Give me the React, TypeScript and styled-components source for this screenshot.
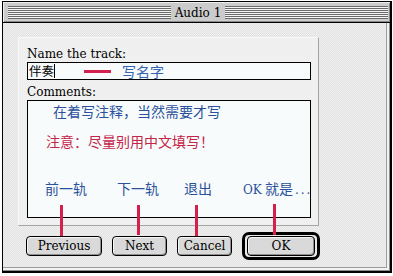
import React from "react";
import styled, { createGlobalStyle } from "styled-components";

const Global = createGlobalStyle`
  html, body { margin: 0; padding: 0; background: #ffffff; }
  body { font-family: "DejaVu Serif", serif; }
  * { box-sizing: border-box; }
`;

const serif = `"DejaVu Serif", "Noto Sans CJK SC", serif`;
const cjk = `"Noto Sans CJK SC", "DejaVu Sans", sans-serif`;

const Window = styled.div`
  position: relative;
  margin: 1px 0 0 2px;
  width: 390px;
  height: 272px;
  border: 1px solid #000;
  border-right-width: 2px;
  border-bottom-width: 2px;
  display: flex;
  flex-direction: column;
  background: #e4e4e4;
`;

const TitleBar = styled.div`
  height: 21px;
  border-bottom: 1px solid #000;
  background: #cbcbcb;
  box-shadow: inset 1px 1px 0 #eeeeee, inset -1px -1px 0 #8a8a8a;
  display: flex;
  align-items: center;
  padding: 0 2px 0 5px;
`;

const Stripes = styled.div`
  flex: 1;
  height: 13px;
  margin-top: 1px;
  background: repeating-linear-gradient(
    to bottom,
    #6a6a6a 0 1px,
    #f4f4f4 1px 2px
  );
`;

const Title = styled.div`
  font-family: ${serif};
  font-size: 12px;
  line-height: 14px;
  color: #000;
  padding: 0 4px;
  margin-top: 1px;
`;

const Frame = styled.div`
  flex: 1;
  display: flex;
  padding: 0 3px 3px 0;
  background: #f2f2f2;
  box-shadow: inset -1px -1px 0 #8c8c8c;
`;

const Content = styled.div`
  flex: 1;
  display: flex;
  flex-direction: column;
  padding: 14px 0 0 15px;
  border-right: 1px solid #9c9c9c;
  border-bottom: 1px solid #9c9c9c;
  background-color: #e9e9e9;
  background-image: repeating-conic-gradient(#e3e3e3 0 25%, #efefef 0 50%);
  background-size: 2px 2px;
`;

const Panel = styled.div`
  width: 301px;
  height: 189px;
  display: flex;
  flex-direction: column;
  padding: 9px 7px 0 8px;
  border: 1px solid #f8f8f8;
  border-right-color: #a4a4a4;
  border-bottom-color: #a4a4a4;
  background-color: #efefef;
  background-image: repeating-conic-gradient(#ececec 0 25%, #f3f3f3 0 50%);
  background-size: 2px 2px;
`;

const Label = styled.div<{ $gap?: number }>`
  font-family: ${serif};
  font-size: 12px;
  line-height: 14px;
  color: #000;
  margin-top: ${(p) => p.$gap ?? 0}px;
  margin-bottom: 1px;
`;

const Field = styled.div`
  height: 18px;
  border: 1px solid #000;
  background: #f7fbfb;
  display: flex;
  align-items: center;
  padding-left: 1px;
`;

const FieldText = styled.span`
  font-family: ${cjk};
  font-size: 12.5px;
  line-height: 14px;
  color: #000;
`;

const Caret = styled.span`
  width: 1px;
  height: 14px;
  background: #000;
`;

const Dash = styled.span`
  width: 27px;
  height: 3px;
  margin-left: 29px;
  background: #d4204c;
`;

const Hint = styled.span<{ $left: number; $color: string }>`
  font-family: ${cjk};
  font-size: 14px;
  line-height: 16px;
  color: ${(p) => p.$color};
  margin-left: ${(p) => p.$left}px;
  white-space: nowrap;
`;

const Comments = styled.div`
  height: 118px;
  border: 1px solid #000;
  background: #f7fbfb;
  display: flex;
  flex-direction: column;
  padding-top: 2px;
`;

const Line = styled.div<{ $top: number }>`
  display: flex;
  align-items: baseline;
  margin-top: ${(p) => p.$top}px;
`;

const Latin = styled.span`
  font-family: ${serif};
  font-size: 12px;
`;

const Dots = styled.span`
  font-family: ${serif};
  font-size: 12px;
  letter-spacing: 2px;
  margin-left: 2px;
`;

const ButtonRow = styled.div`
  display: flex;
  align-items: center;
  gap: 10px;
  margin: 6px 0 0 8px;
  height: 28px;
`;

const Button = styled.div<{ $w: number }>`
  width: ${(p) => p.$w}px;
  height: 20px;
  border: 1px solid #000;
  border-radius: 4px;
  background: #d9d9d9;
  box-shadow: inset 1px 1px 0 #f6f6f6, inset -1px -1px 0 #8e8e8e;
  display: flex;
  align-items: center;
  justify-content: center;
  font-family: ${serif};
  font-size: 12px;
  line-height: 14px;
  color: #000;
`;

const DefaultRing = styled.div`
  border: 3px solid #000;
  border-radius: 7px;
  padding: 1px 2px;
  display: flex;
`;

const Marker = styled.div<{ $x: number; $y: number; $h: number }>`
  position: absolute;
  left: ${(p) => p.$x}px;
  top: ${(p) => p.$y}px;
  width: 3px;
  height: ${(p) => p.$h}px;
  background: #d4204c;
`;

const BLUE = "#2b519c";
const RED = "#c42448";

export default function App() {
  return (
    <>
      <Global />
      <Window>
        <TitleBar>
          <Stripes />
          <Title>Audio 1</Title>
          <Stripes />
        </TitleBar>
        <Frame>
          <Content>
            <Panel>
              <Label>Name the track:</Label>
              <Field>
                <FieldText>伴奏</FieldText>
                <Caret />
                <Dash />
                <Hint $left={11} $color="#3563b2">写名字</Hint>
              </Field>
              <Label $gap={5}>Comments:</Label>
              <Comments>
                <Line $top={0}>
                  <Hint $left={25} $color={BLUE}>在着写注释，当然需要才写</Hint>
                </Line>
                <Line $top={14}>
                  <Hint $left={18} $color={RED}>注意：尽量别用中文填写！</Hint>
                </Line>
                <Line $top={31}>
                  <Hint $left={17} $color={BLUE}>前一轨</Hint>
                  <Hint $left={30} $color={BLUE}>下一轨</Hint>
                  <Hint $left={25} $color={BLUE}>退出</Hint>
                  <Hint $left={31} $color={BLUE}>
                    <Latin>OK</Latin> 就是<Dots>...</Dots>
                  </Hint>
                </Line>
              </Comments>
            </Panel>
            <ButtonRow>
              <Button $w={76}>Previous</Button>
              <Button $w={55}>Next</Button>
              <Button $w={55}>Cancel</Button>
              <DefaultRing>
                <Button $w={68}>OK</Button>
              </DefaultRing>
            </ButtonRow>
          </Content>
        </Frame>
        <Marker $x={57} $y={203} $h={31} />
        <Marker $x={134} $y={203} $h={30} />
        <Marker $x={192} $y={203} $h={31} />
        <Marker $x={270} $y={202} $h={31} />
      </Window>
    </>
  );
}
